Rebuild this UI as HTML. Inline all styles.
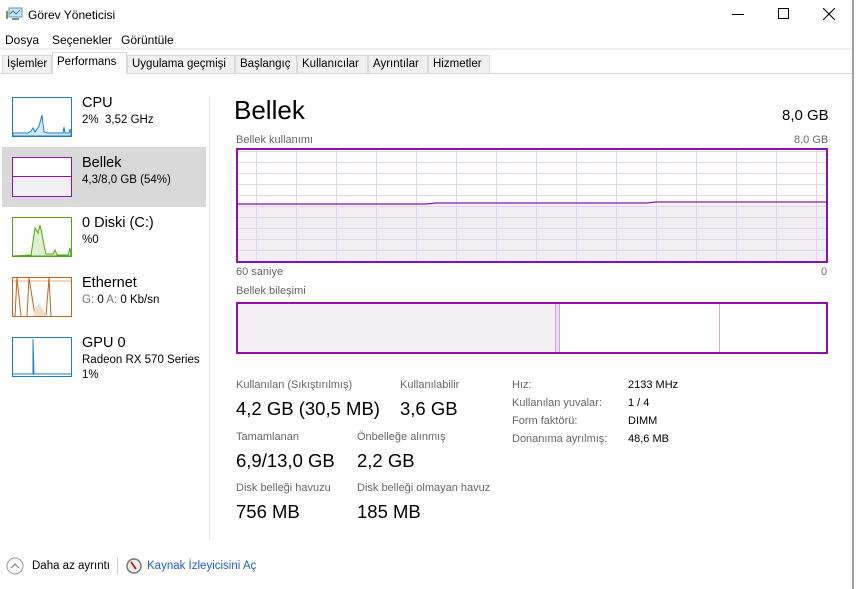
<!DOCTYPE html>
<html><head><meta charset="utf-8"><style>
*{margin:0;padding:0;box-sizing:border-box}
body{width:860px;height:589px;background:#fff;font-family:"Liberation Sans",sans-serif;position:relative;overflow:hidden;color:#000}
.a{position:absolute;white-space:nowrap}
.tab{position:absolute;top:55px;height:19px;border:1px solid #d9d9d9;background:#f0f0f0;font-size:11.5px;padding:2px 4px 0}
.thumb{position:absolute;left:12px;width:60px;height:40px;border:1px solid}
.t1{font-size:14.5px}
.t2{font-size:11.5px}
.lbl{font-size:11px;color:#666}
.big{font-size:18.5px}
.sm{font-size:11px}
</style></head><body>
<!-- title -->
<svg class="a" style="left:6px;top:7px" width="18" height="14"><rect x="3" y="1" width="13" height="9" fill="#cfe6f7" stroke="#6b8fb0"/><polyline points="4,7 7,4 10,7 14,3" fill="none" stroke="#2a7bd0"/><rect x="0" y="4" width="2" height="8" fill="#7c9a5a"/><rect x="6" y="11" width="7" height="2" fill="#888"/></svg>
<div class="a" style="left:28px;top:8px;font-size:12px">Görev Yöneticisi</div>
<div class="a" style="left:732px;top:14px;width:12px;height:1px;background:#000"></div>
<div class="a" style="left:778px;top:8px;width:11px;height:11px;border:1px solid #000"></div>
<svg class="a" style="left:823px;top:8px" width="12" height="12"><path d="M0 0L12 12M12 0L0 12" stroke="#000" stroke-width="1.1"/></svg>
<div class="a" style="left:852px;top:0;width:2px;height:589px;background:#a0a0a0"></div>
<!-- menu -->
<div class="a" style="left:5px;top:33px;font-size:12px">Dosya</div>
<div class="a" style="left:52px;top:33px;font-size:12px">Seçenekler</div>
<div class="a" style="left:121px;top:33px;font-size:12px">Görüntüle</div>
<div class="a" style="left:0;top:48px;width:852px;height:2px;background:#f0f0f0"></div>
<!-- tabs -->
<div class="a" style="left:0;top:73px;width:852px;height:1px;background:#d9d9d9"></div>
<div class="tab" style="left:2px;width:50px">İşlemler</div>
<div class="tab" style="left:52px;top:52px;height:22px;width:75px;background:#fff;border-bottom:none;padding-top:3px">Performans</div>
<div class="tab" style="left:127px;width:108px">Uygulama geçmişi</div>
<div class="tab" style="left:235px;width:62px">Başlangıç</div>
<div class="tab" style="left:297px;width:71px">Kullanıcılar</div>
<div class="tab" style="left:368px;width:60px">Ayrıntılar</div>
<div class="tab" style="left:428px;width:62px">Hizmetler</div>
<!-- left panel -->
<div class="a" style="left:2px;top:147px;width:204px;height:60px;background:#d9d9d9"></div>
<div class="a" style="left:209px;top:97px;width:1px;height:443px;background:#e3e3e3"></div>
<svg class="thumb" style="top:97px;border-color:#1a7fc9" width="60" height="40" viewBox="0 0 58 38"><path d="M0 35L15 35L18 33L20 30L22 34L26 28L29 17L31 34L35 35L40 35L50 35L51 29L52 35L56 35L57 31L58 35L58 38L0 38Z" fill="#d6ebf8" stroke="#1a7fc9"/></svg>
<div class="thumb" style="top:157px;border-color:#8b12ae;background:linear-gradient(#fff 0,#fff 18px,#8b12ae 18px,#8b12ae 19px,#f1eff3 19px)"></div>
<svg class="thumb" style="top:217px;border-color:#4da60c" width="60" height="40" viewBox="0 0 58 38"><path d="M0 38L18 37L20 24L22 10L25 15L27 7L29 16L31 27L33 36L40 36L42 32L44 37L55 37L57 30L58 38Z" fill="#dff0d0" stroke="#4da60c"/></svg>
<svg class="thumb" style="top:277px;border-color:#c0631b" width="60" height="40" viewBox="0 0 58 38"><path d="M0 3H58" stroke="#c0631b" stroke-opacity=".5"/><path d="M2 38L4 0L8 38M14 38L16 0L20 25L22 38M33 38L36 0L38 38" fill="none" stroke="#c0631b"/><path d="M20 38L22 30L26 25L30 32L34 38Z" fill="#f4dccb"/></svg>
<svg class="thumb" style="top:337px;border-color:#1a7fc9" width="60" height="40" viewBox="0 0 58 38"><path d="M0 36H20L20 1L21 36H58" fill="none" stroke="#1a7fc9"/></svg>
<div class="a t1" style="left:82px;top:95px">CPU</div><div class="a t2" style="left:82px;top:114px">2%&nbsp; 3,52 GHz</div>
<div class="a t1" style="left:82px;top:155px">Bellek</div><div class="a t2" style="left:82px;top:174px">4,3/8,0 GB (54%)</div>
<div class="a t1" style="left:82px;top:215px">0 Diski (C:)</div><div class="a t2" style="left:82px;top:234px">%0</div>
<div class="a t1" style="left:82px;top:275px">Ethernet</div><div class="a t2" style="left:82px;top:294px"><span style="color:#777">G:</span> 0 <span style="color:#777">A:</span> 0 Kb/sn</div>
<div class="a t1" style="left:82px;top:335px">GPU 0</div><div class="a t2" style="left:82px;top:354px">Radeon RX 570 Series</div><div class="a t2" style="left:82px;top:369px">1%</div>
<!-- main -->
<div class="a" style="left:234px;top:95px;font-size:26px">Bellek</div>
<div class="a" style="left:782px;top:107px;font-size:15px">8,0 GB</div>
<div class="a lbl" style="left:236px;top:134px">Bellek kullanımı</div>
<div class="a lbl" style="left:794px;top:134px">8,0 GB</div>
<svg class="a" style="left:236px;top:148px" width="592" height="115">
<defs><pattern id="g" x="20" y="3" width="40" height="11" patternUnits="userSpaceOnUse"><path d="M0.5 0V11M0 0.5H40" stroke="#e6d4ec" fill="none"/></pattern></defs>
<rect x="1" y="56" width="590" height="58" fill="#f1eff3"/>
<rect x="1" y="1" width="590" height="113" fill="url(#g)"/>
<path d="M1 56H190L200 55H410L420 54H591" stroke="#8b12ae" fill="none" stroke-width="1.2"/>
<rect x="1" y="1" width="590" height="113" fill="none" stroke="#8b12ae" stroke-width="2"/>
</svg>
<div class="a lbl" style="left:236px;top:266px">60 saniye</div>
<div class="a lbl" style="left:821px;top:266px">0</div>
<div class="a lbl" style="left:236px;top:285px">Bellek bileşimi</div>
<div class="a" style="left:236px;top:302px;width:592px;height:52px;border:2px solid #8b12ae;background:#fff">
<div class="a" style="left:0;top:0;width:318px;height:48px;background:#f1eff3;border-right:1px solid #d2a8df"></div>
<div class="a" style="left:318px;top:0;width:4px;height:48px;background:#ead9f0;border-right:1px solid #d2a8df"></div>
<div class="a" style="left:481px;top:0;width:1px;height:48px;background:#d2a8df"></div>
</div>
<!-- stats -->
<div class="a lbl" style="left:236px;top:379px">Kullanılan (Sıkıştırılmış)</div>
<div class="a big" style="left:236px;top:398px">4,2 GB (30,5 MB)</div>
<div class="a lbl" style="left:400px;top:379px">Kullanılabilir</div>
<div class="a big" style="left:400px;top:398px">3,6 GB</div>
<div class="a lbl" style="left:236px;top:431px">Tamamlanan</div>
<div class="a big" style="left:236px;top:450px">6,9/13,0 GB</div>
<div class="a lbl" style="left:357px;top:431px">Önbelleğe alınmış</div>
<div class="a big" style="left:357px;top:450px">2,2 GB</div>
<div class="a lbl" style="left:236px;top:482px">Disk belleği havuzu</div>
<div class="a big" style="left:236px;top:501px">756 MB</div>
<div class="a lbl" style="left:357px;top:482px">Disk belleği olmayan havuz</div>
<div class="a big" style="left:357px;top:501px">185 MB</div>
<div class="a lbl" style="left:512px;top:379px">Hız:</div><div class="a sm" style="left:628px;top:379px">2133 MHz</div>
<div class="a lbl" style="left:512px;top:397px">Kullanılan yuvalar:</div><div class="a sm" style="left:628px;top:397px">1 / 4</div>
<div class="a lbl" style="left:512px;top:415px">Form faktörü:</div><div class="a sm" style="left:628px;top:415px">DIMM</div>
<div class="a lbl" style="left:512px;top:433px">Donanıma ayrılmış:</div><div class="a sm" style="left:628px;top:433px">48,6 MB</div>
<!-- footer -->
<svg class="a" style="left:6px;top:557px" width="18" height="18"><circle cx="9" cy="9" r="8" fill="none" stroke="#999"/><path d="M5 11L9 7L13 11" fill="none" stroke="#888" stroke-width="1.2"/></svg>
<div class="a" style="left:32px;top:560px;font-size:11.5px">Daha az ayrıntı</div>
<div class="a" style="left:117px;top:558px;width:1px;height:16px;background:#ccc"></div>
<svg class="a" style="left:126px;top:558px" width="16" height="16"><circle cx="8" cy="8" r="7" fill="#eee" stroke="#777" stroke-width="1.5"/><path d="M5 4L10 11" stroke="#c00" stroke-width="1.6"/></svg>
<div class="a" style="left:147px;top:560px;font-size:11.5px;color:#1a5fcc">Kaynak İzleyicisini Aç</div>
</body></html>
